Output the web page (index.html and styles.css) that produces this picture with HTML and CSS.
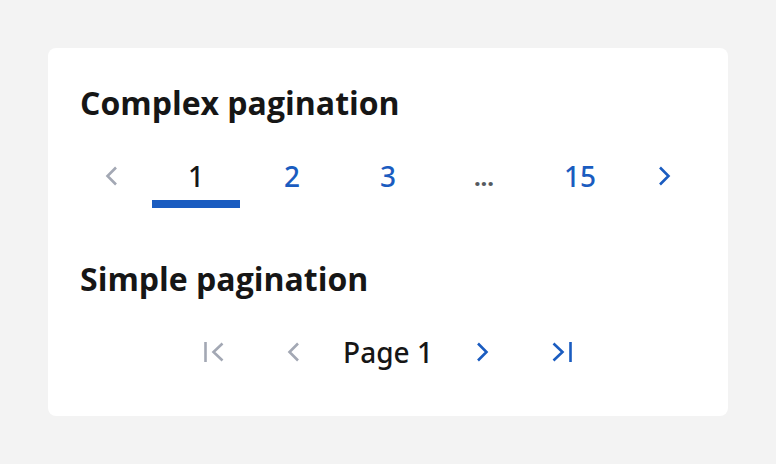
FILE: index.html
```html
<!DOCTYPE html>
<html>
<head>
<meta charset="utf-8">
<link rel="stylesheet" href="styles.css">
</head>
<body>
<div class="card">
  <h2 class="title">Complex pagination</h2>
  <nav class="pager">
    <span class="item arrow disabled"><svg viewBox="0 0 24 24" width="24" height="24"><path d="M16 3.5 L7.5 12 L16 20.5"/></svg></span>
    <span class="item page current">1</span>
    <span class="item page link">2</span>
    <span class="item page link">3</span>
    <span class="item page ellipsis">...</span>
    <span class="item page link">15</span>
    <span class="item arrow active"><svg viewBox="0 0 24 24" width="24" height="24"><path d="M8 3.5 L16.5 12 L8 20.5"/></svg></span>
  </nav>
  <h2 class="title second">Simple pagination</h2>
  <nav class="simple">
    <span class="btn disabled gap-right"><svg viewBox="0 0 24 24" width="24" height="24"><path d="M3.5 2 V22 M20.5 3.5 L11.5 12 L20.5 20.5"/></svg></span>
    <span class="btn disabled"><svg viewBox="0 0 24 24" width="24" height="24"><path d="M16 3.5 L7.5 12 L16 20.5"/></svg></span>
    <span class="label">Page 1</span>
    <span class="btn active gap-right"><svg viewBox="0 0 24 24" width="24" height="24"><path d="M8 3.5 L16.5 12 L8 20.5"/></svg></span>
    <span class="btn active"><svg viewBox="0 0 24 24" width="24" height="24"><path d="M3.5 3.5 L12.5 12 L3.5 20.5 M20.5 2 V22"/></svg></span>
  </nav>
</div>
</body>
</html>
```
FILE: styles.css
```css
html, body {
  margin: 0;
  padding: 0;
  background: #f3f3f3;
  font-family: "Open Sans", "Noto Sans", sans-serif;
  color: #161616;
}
.card {
  box-sizing: border-box;
  margin: 48px;
  width: 680px;
  height: 368px;
  padding: 32px;
  background: #ffffff;
  border-radius: 8px;
}
.title {
  margin: 0;
  font-size: 32px;
  font-weight: 700;
  line-height: 46px;
  color: #161616;
}
.title.second {
  margin-top: 48px;
}
.pager {
  margin-top: 26px;
  display: flex;
  gap: 8px;
  height: 56px;
}
.item {
  display: flex;
  align-items: center;
  justify-content: center;
  box-sizing: border-box;
  height: 56px;
  padding-bottom: 8px;
}
.arrow {
  width: 64px;
}
.page {
  width: 88px;
  font-family: "Noto Sans", "Open Sans", sans-serif;
  font-size: 28px;
  font-weight: 500;
  color: #1a5cc0;
}
.page.current {
  color: #161616;
  border-bottom: 8px solid #1a5cc0;
  padding-bottom: 0;
}
.page.ellipsis {
  color: #555a60;
  font-size: 24px;
  font-weight: 700;
}
svg {
  fill: none;
  stroke-width: 2.6;
  stroke-linecap: butt;
  stroke-linejoin: miter;
}
.disabled svg {
  stroke: #a3a8b4;
}
.active svg {
  stroke: #1a5cc0;
}
.simple {
  margin-top: 18px;
  display: flex;
  justify-content: center;
  align-items: center;
  height: 64px;
}
.btn {
  width: 48px;
  height: 48px;
  display: flex;
  align-items: center;
  justify-content: center;
}
.btn.gap-right {
  margin-right: 32px;
}
.label {
  padding: 0 25px;
  font-family: "Noto Sans", "Open Sans", sans-serif;
  font-size: 28px;
  font-weight: 500;
  color: #161616;
}
```
